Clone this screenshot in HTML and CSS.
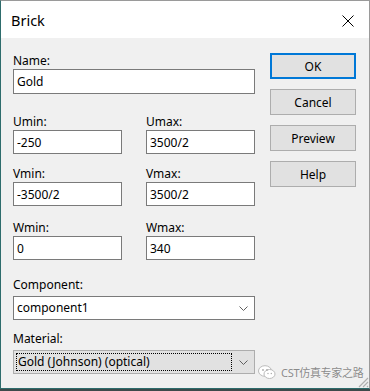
FILE: index.html
```html
<!DOCTYPE html>
<html>
<head>
<meta charset="utf-8">
<link rel="stylesheet" href="styles.css">
</head>
<body>
<div class="window">
  <div class="titlebar">
    <span class="title">Brick</span>
    <span class="close"><svg width="12" height="12" viewBox="0 0 12 12"><path d="M0.5 0.5 L11.5 11.5 M11.5 0.5 L0.5 11.5" stroke="#000" stroke-width="1" fill="none"/></svg></span>
  </div>
  <div class="content">
    <div class="form">
      <div class="field">
        <div class="label">Name:</div>
        <input class="edit edit-tall" type="text" value="Gold">
      </div>
      <div class="pair pair-u">
        <div class="field"><div class="label">Umin:</div><input class="edit" type="text" value="-250"></div>
        <div class="field"><div class="label">Umax:</div><input class="edit" type="text" value="3500/2"></div>
      </div>
      <div class="pair pair-v">
        <div class="field"><div class="label">Vmin:</div><input class="edit" type="text" value="-3500/2"></div>
        <div class="field"><div class="label">Vmax:</div><input class="edit" type="text" value="3500/2"></div>
      </div>
      <div class="pair pair-w">
        <div class="field"><div class="label">Wmin:</div><input class="edit" type="text" value="0"></div>
        <div class="field"><div class="label">Wmax:</div><input class="edit" type="text" value="340"></div>
      </div>
      <div class="field field-comp">
        <div class="label label-combo">Component:</div>
        <div class="combo combo-white">
          <span class="combo-text">component1</span>
          <svg class="chev" width="9" height="5" viewBox="0 0 9 5"><path d="M0.5 0.5 L4.5 4.5 L8.5 0.5" stroke="#606060" stroke-width="1" fill="none"/></svg>
        </div>
      </div>
      <div class="field field-mat">
        <div class="label label-combo">Material:</div>
        <div class="combo combo-gray">
          <span class="combo-text focus">Gold (Johnson) (optical)</span>
          <svg class="chev" width="9" height="5" viewBox="0 0 9 5"><path d="M0.5 0.5 L4.5 4.5 L8.5 0.5" stroke="#606060" stroke-width="1" fill="none"/></svg>
        </div>
      </div>
    </div>
    <div class="buttons">
      <button class="btn btn-default">OK</button>
      <button class="btn">Cancel</button>
      <button class="btn">Preview</button>
      <button class="btn">Help</button>
    </div>
  </div>
  <div class="watermark">
    <svg width="18" height="15" viewBox="0 0 18 15">
      <ellipse cx="7" cy="6" rx="6.5" ry="5.3" fill="#fff" stroke="#bbb" stroke-width="1"/>
      <ellipse cx="11.5" cy="9" rx="5.5" ry="4.5" fill="#fff" stroke="#bbb" stroke-width="1"/>
      <circle cx="5" cy="5" r="0.9" fill="#aaa"/><circle cx="9" cy="5" r="0.9" fill="#aaa"/>
      <circle cx="10" cy="8.5" r="0.7" fill="#aaa"/><circle cx="13.3" cy="8.5" r="0.7" fill="#aaa"/>
    </svg>
    <span class="wm-text">CST仿真专家之路</span>
  </div>
  <svg class="grip" width="13" height="13" viewBox="0 0 13 13">
    <path d="M12 3 L3 12 M12 7 L7 12 M12 11 L11 12" stroke="#b0b0b0" stroke-width="1.2" fill="none"/>
  </svg>
</div>
</body>
</html>
```

FILE: styles.css
```css
html, body {
  margin: 0;
  padding: 0;
}
body {
  width: 370px;
  height: 391px;
  background: #3c4a4a;
  overflow: hidden;
  font-family: "Noto Sans", "Noto Sans CJK SC", sans-serif;
  font-size: 12px;
  color: #000;
}
.window {
  position: relative;
  width: 370px;
  height: 389px;
  box-sizing: border-box;
  border-left: 1px solid #2e6c6c;
  border-bottom: 1px solid #2e6c6c;
  border-top: 1px solid #9a9a9a;
  border-right: 1px solid #9a9a9a;
  background: #f0f0f0;
}
.titlebar {
  height: 37px;
  background: #fff;
  display: flex;
  align-items: center;
  justify-content: space-between;
}
.title {
  font-size: 14.5px;
  margin-left: 10px;
  margin-top: 1px;
}
.close {
  width: 12px;
  height: 12px;
  margin-right: 15px;
  margin-top: 2px;
  display: flex;
}
.content {
  display: flex;
  padding: 15px 0 0 12px;
}
.form {
  width: 242px;
  display: flex;
  flex-direction: column;
}
.field {
  display: flex;
  flex-direction: column;
}
.label {
  height: 16px;
  line-height: 16px;
  white-space: nowrap;
}
.label-combo {
  margin-bottom: 3px;
}
.edit {
  box-sizing: border-box;
  height: 24px;
  width: 100%;
  margin: 0;
  border: 1px solid #7a7a7a;
  background: #fff;
  padding: 0 3px;
  font: inherit;
  color: #000;
  outline: none;
}
.edit-tall {
  height: 25px;
}
.pair {
  display: grid;
  grid-template-columns: 109px 109px;
  column-gap: 24px;
}
.pair-u { margin-top: 20px; }
.pair-v { margin-top: 12px; }
.pair-w { margin-top: 14px; }
.field-comp { margin-top: 17px; }
.field-mat { margin-top: 11px; }
.combo {
  box-sizing: border-box;
  height: 24px;
  display: flex;
  align-items: center;
  justify-content: space-between;
  padding: 0 6px 0 3px;
}
.combo-white {
  background: #fff;
  border: 1px solid #7a7a7a;
}
.combo-gray {
  background: #e1e1e1;
  border: 1px solid #adadad;
  padding-left: 2px;
}
.combo-text {
  line-height: 16px;
}
.focus {
  box-sizing: border-box;
  width: 216px;
  height: 18px;
  line-height: 16px;
  border: 1px dotted #000;
  padding-left: 1px;
}
.chev {
  display: block;
}
.buttons {
  margin-left: 15px;
  display: flex;
  flex-direction: column;
  gap: 10px;
}
.btn {
  box-sizing: border-box;
  width: 86px;
  height: 26px;
  margin: 0;
  padding: 0;
  background: #e1e1e1;
  border: 1px solid #adadad;
  font: inherit;
  color: #000;
}
.btn-default {
  border: 2px solid #0078d7;
}
.watermark {
  position: absolute;
  left: 257px;
  top: 363px;
  display: flex;
  align-items: center;
  gap: 5px;
}
.wm-text {
  font-size: 11px;
  color: #8a8a8a;
  text-shadow: 0 0 1px #fff;
  letter-spacing: -0.3px;
}
.grip {
  position: absolute;
  right: 0;
  bottom: 0;
}
```
